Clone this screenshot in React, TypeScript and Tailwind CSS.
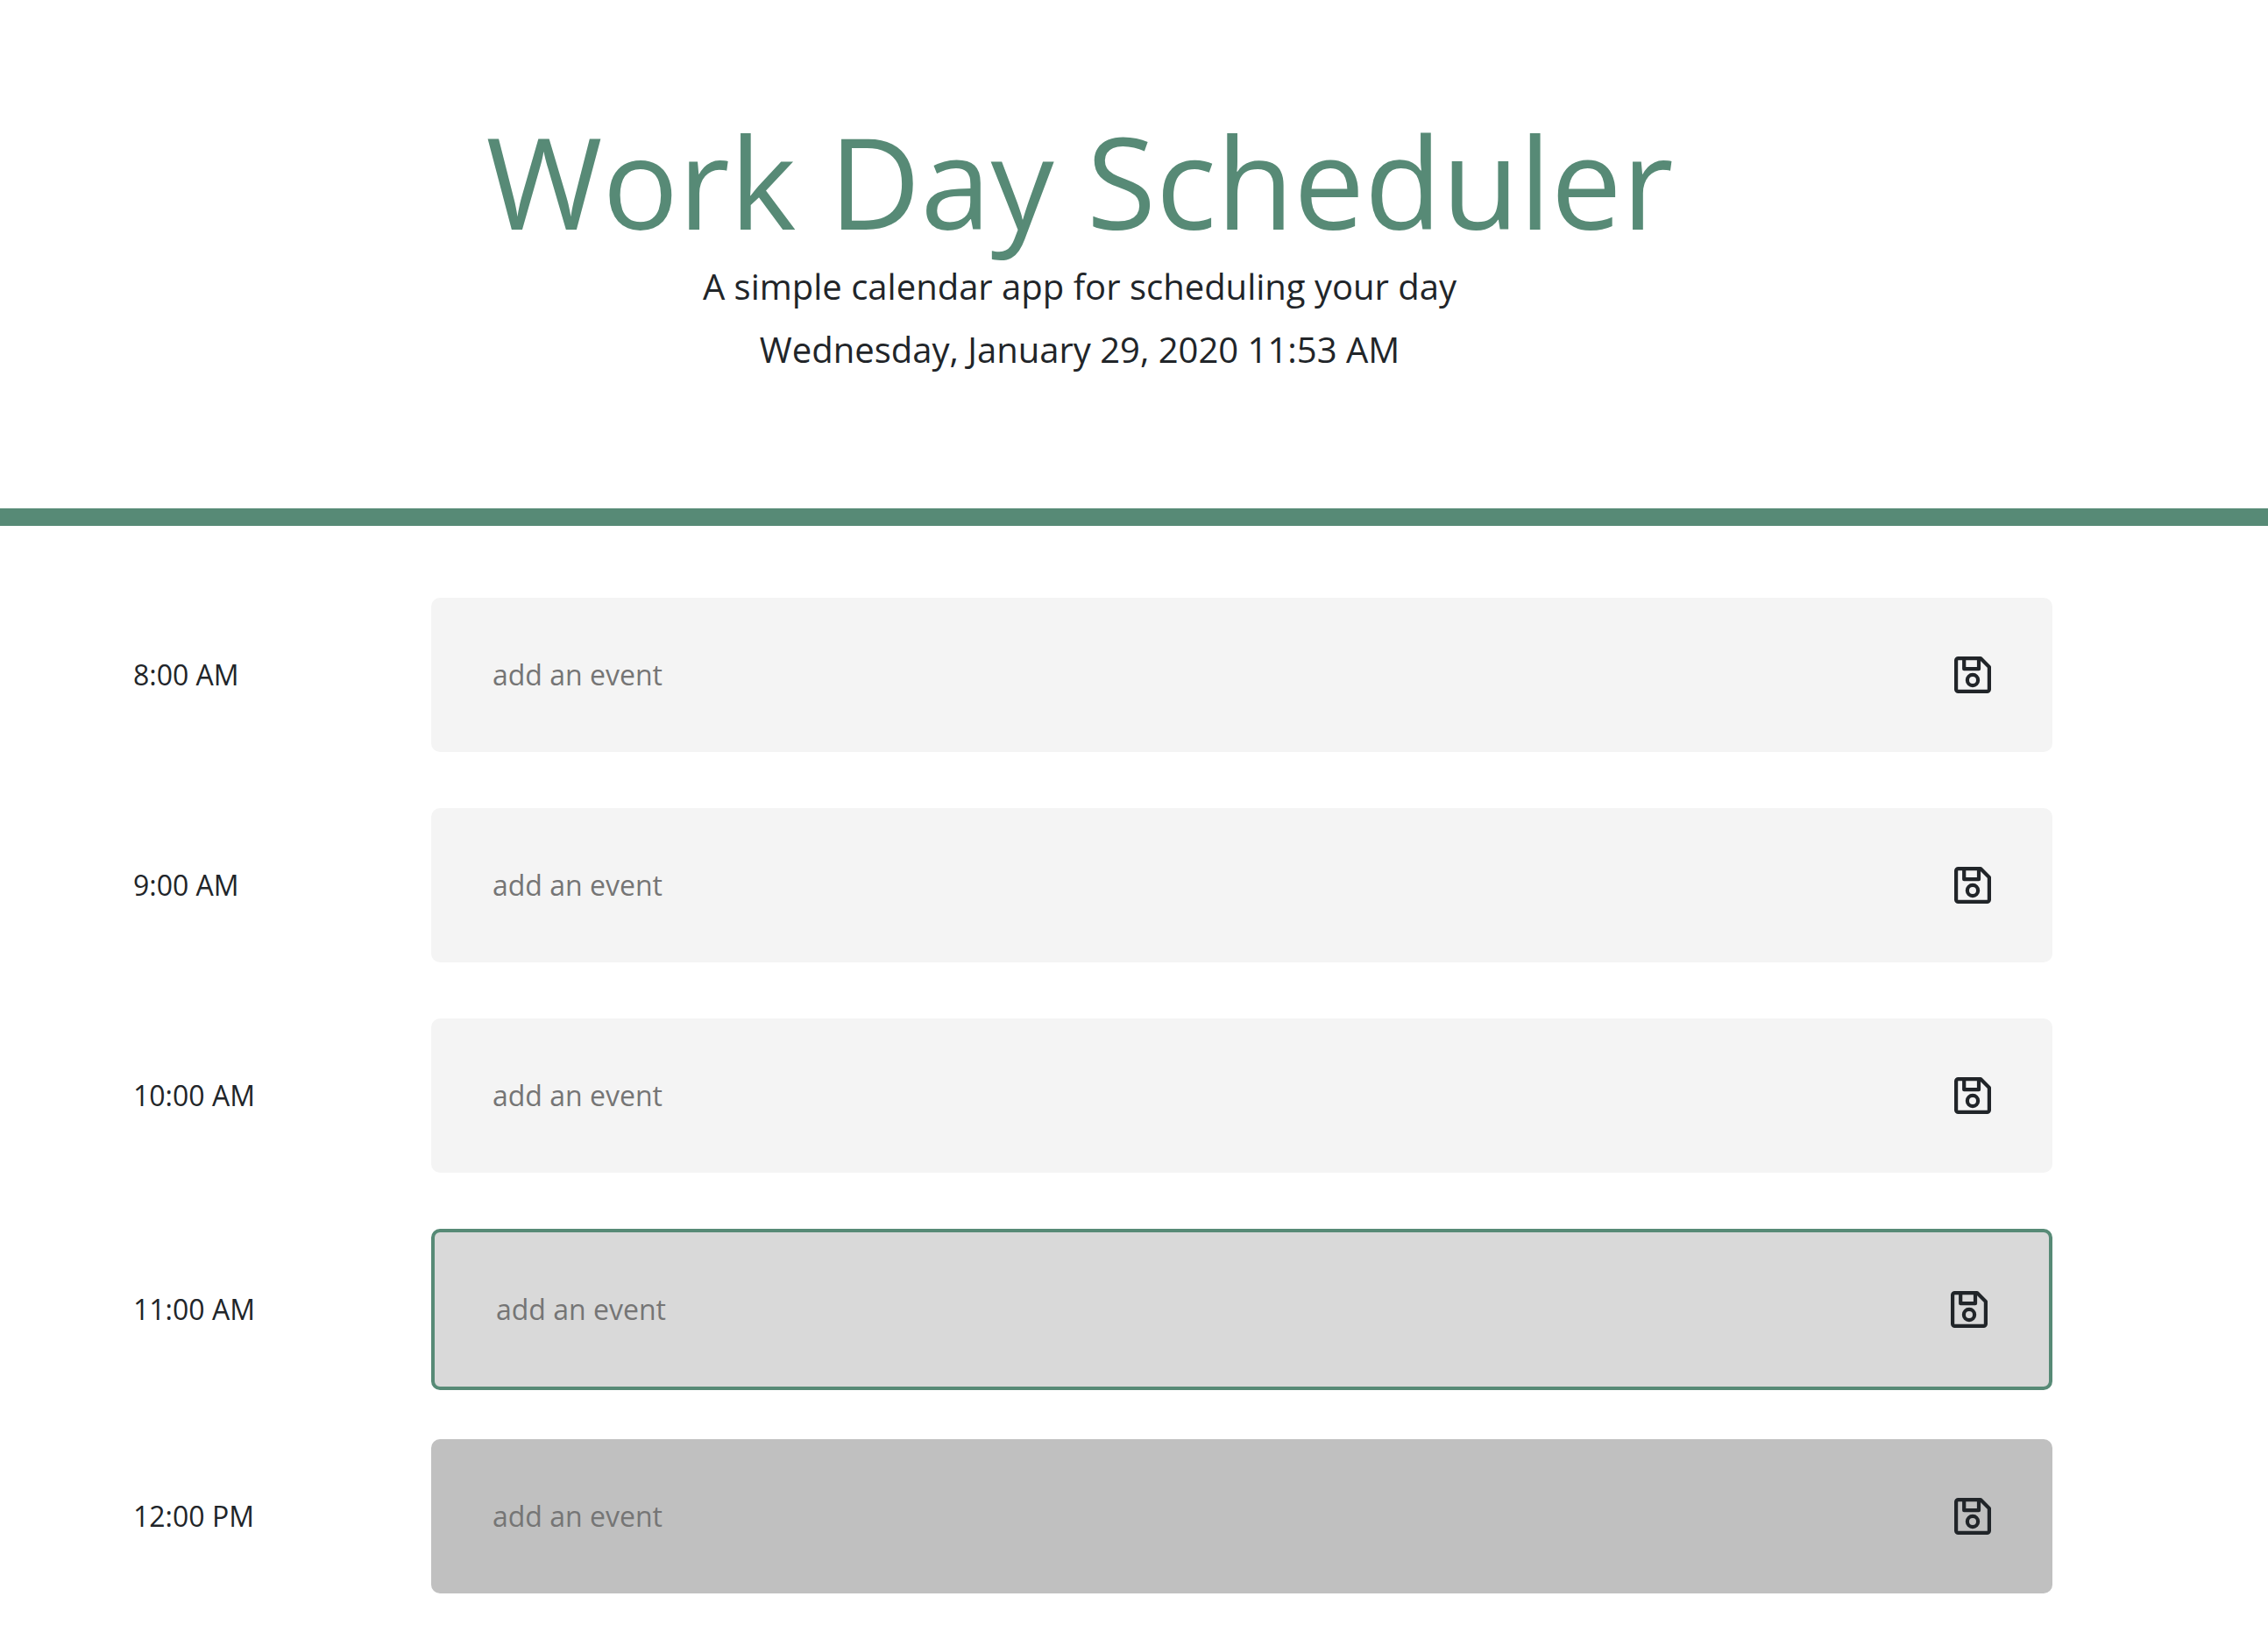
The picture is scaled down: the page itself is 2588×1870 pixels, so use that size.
const SaveIcon = () => (
  <svg className="size-[42px]" viewBox="0 0 42 42" fill="none" stroke="#212529" strokeWidth="4.2" strokeLinejoin="round" aria-hidden="true">
    <path d="M4.6 2.1H30L39.9 12V37.4a2.5 2.5 0 0 1-2.5 2.5H4.6a2.5 2.5 0 0 1-2.5-2.5V4.6a2.5 2.5 0 0 1 2.5-2.5z" />
    <path d="M11.2 2.5V14.2H28V2.5" />
    <circle cx="21" cy="27" r="6.1" />
  </svg>
);

const slots = [
  { time: '8:00 AM', box: 'bg-[#f4f4f4] h-44' },
  { time: '9:00 AM', box: 'bg-[#f4f4f4] h-44' },
  { time: '10:00 AM', box: 'bg-[#f4f4f4] h-44' },
  { time: '11:00 AM', box: 'bg-[#d9d9d9] h-46 border-4 border-[#578a76]' },
  { time: '12:00 PM', box: 'bg-[#c0c0c0] h-44' },
];

export default function App() {
  return (
    <div className="min-h-screen bg-white font-['Open_Sans',sans-serif] text-[#212529]">
      <header className="border-b-20 border-[#578a76] pt-[115px] pr-31 pb-[151px] text-center">
        <h1 className="text-[144px] leading-[182px] text-[#578a76]">Work Day Scheduler</h1>
        <p className="text-[40px] leading-[60px]">A simple calendar app for scheduling your day</p>
        <p className="mt-3 text-[40px] leading-[60px]">Wednesday, January 29, 2020 11:53 AM</p>
      </header>
      <main className="pt-[82px] pr-[246px] pl-38">
        {slots.map((slot, i) => (
          <div key={slot.time} className="h-60 last:h-auto">
            <div className="flex items-center">
              <label htmlFor={`event-${i}`} className="w-[340px] shrink-0 text-[32px] leading-12">{slot.time}</label>
              <div className={`flex min-w-0 flex-1 items-center rounded-[10px] px-[70px] ${slot.box}`}>
                <input id={`event-${i}`} type="text" placeholder="add an event" className="min-w-0 flex-1 bg-transparent text-[32px] leading-12 outline-none placeholder:text-[#757575]" />
                <button type="button" aria-label={`Save ${slot.time}`}><SaveIcon /></button>
              </div>
            </div>
          </div>
        ))}
      </main>
    </div>
  );
}
